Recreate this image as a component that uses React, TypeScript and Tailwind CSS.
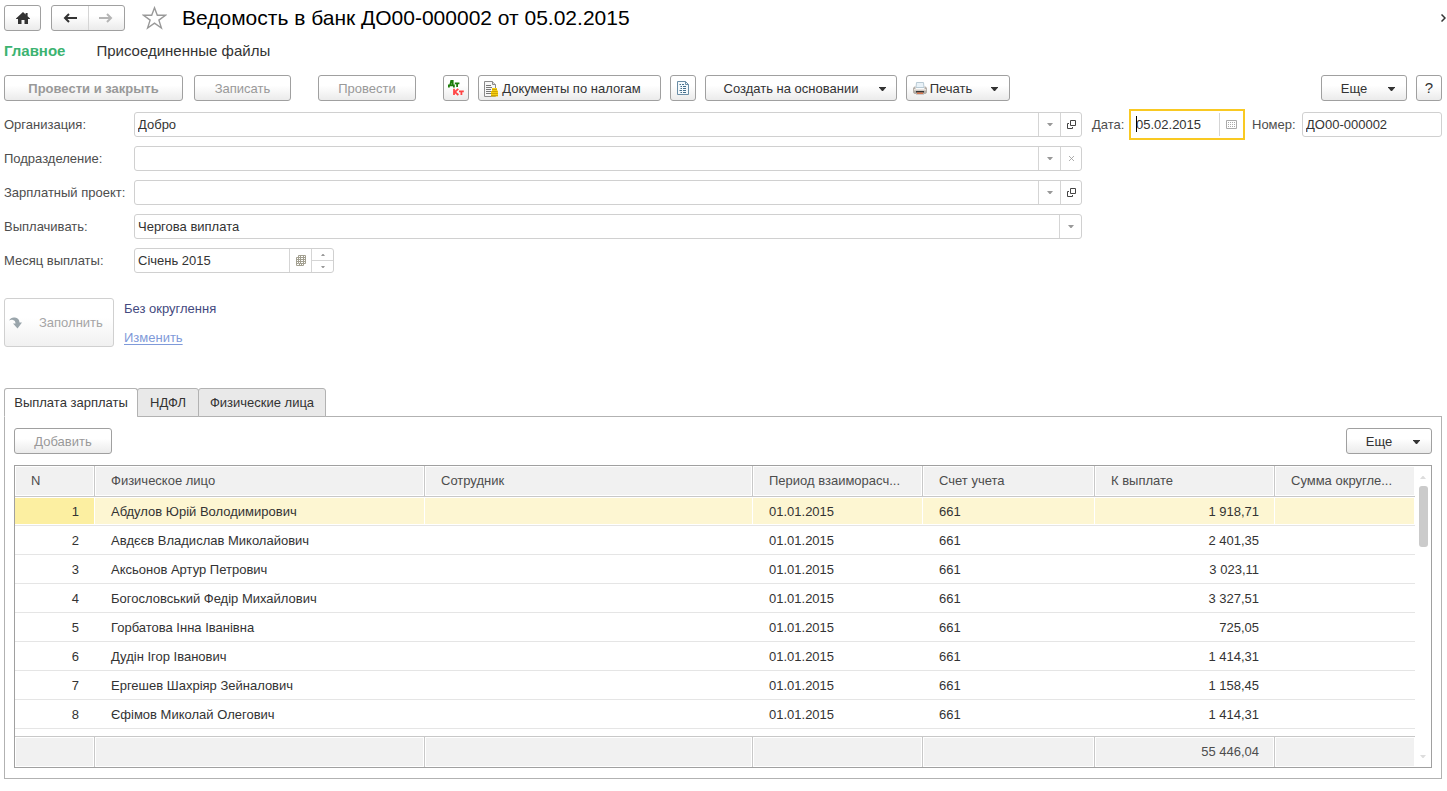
import type { ReactNode } from "react";
import clsx from "clsx";

const columns = [
  { title: "N", width: "w-[80px]" },
  { title: "Физическое лицо", width: "w-[330px]" },
  { title: "Сотрудник", width: "" },
  { title: "Период взаиморасч...", width: "w-[170px]" },
  { title: "Счет учета", width: "w-[172px]" },
  { title: "К выплате", width: "w-[180px]" },
  { title: "Сумма округле...", width: "w-[140px]" },
];

const rows = [
  { name: "Абдулов Юрій Володимирович", sum: "1 918,71" },
  { name: "Авдєєв Владислав Миколайович", sum: "2 401,35" },
  { name: "Аксьонов Артур Петрович", sum: "3 023,11" },
  { name: "Богословський Федір Михайлович", sum: "3 327,51" },
  { name: "Горбатова Інна Іванівна", sum: "725,05" },
  { name: "Дудін Ігор Іванович", sum: "1 414,31" },
  { name: "Ергешев Шахріяр Зейналович", sum: "1 158,45" },
  { name: "Єфімов Миколай Олегович", sum: "1 414,31" },
];

const Caret = ({ className }: { className?: string }) => (
  <svg viewBox="0 0 7 4" className={clsx("h-1 w-[7px] shrink-0", className)} fill="currentColor">
    <path d="M0 0h7v.6L4 4H3L0 .6z" />
  </svg>
);

const SmallCaret = ({ up }: { up?: boolean }) => (
  <svg viewBox="0 0 6 3" className={clsx("h-[3px] w-[6px]", up && "rotate-180")} fill="currentColor">
    <path d="M0 0h6L3.5 3h-1z" />
  </svg>
);

const HomeIcon = () => (
  <svg viewBox="0 0 14 12" className="h-3 w-[14px]" fill="#333">
    <path d="M7 0l2.6 2.4V1h2v3.2L14 6.5V7h-2v5H8.5V8h-3v4H2V7H0v-.5z" />
  </svg>
);

const ArrowIcon = ({ flip }: { flip?: boolean }) => (
  <svg viewBox="0 0 14 10" className={clsx("h-[10px] w-[14px]", flip && "rotate-180")} fill="none">
    <path d="M14 5H2M6 1L2 5l4 4" stroke="currentColor" strokeWidth="2" />
  </svg>
);

const StarIcon = () => (
  <svg viewBox="0 0 25 24" className="h-6 w-[25px]" fill="#fff" stroke="#999" strokeWidth="1.4">
    <path d="M12.5 1.8l2.8 7.4h8.2l-6.6 4.9 2.5 8-6.9-4.9-6.9 4.9 2.5-8-6.6-4.9h8.2z" />
  </svg>
);

const DtKtIcon = () => (
  <svg viewBox="0 0 16 16" className="h-4 w-4" fill="none">
    <g stroke="#1e7d0c" strokeWidth="1.8">
      <path d="M.9 7.4V5.4h5v2M2.2 5.2L3.2 1h1.500v4.400" />
      <path d="M6.800 3.400h4.600M9.100 3.400v3.600" />
    </g>
    <g stroke="#f44" strokeWidth="1.800">
      <path d="M6 8.800v6.200M10.300 8.900L6.800 12l3.600 3" />
      <path d="M11 11.400h4.800M13.400 11.400v3.600" />
    </g>
  </svg>
);

const TaxDocIcon = () => (
  <svg viewBox="0 0 15 16" className="h-4 w-[15px]" fill="none">
    <path d="M.5.5h8l3 3v12H.5z" fill="#f7f7f7" stroke="#8a8a8a" />
    <path d="M8.5.5v3h3" fill="#ddd" stroke="#8a8a8a" />
    <path d="M2 4.500h5M2 6.500h6M2 8.500h5M2 10.500h5M2 12.500h5" stroke="#777" />
    <path d="M8 7h5v2.500h1V15.500H7V10h1z" fill="#f7cf12" />
    <path d="M8 8.500h5M7.500 10.500h6M7 12.500h7M7 14.500h7" stroke="#c29a00" strokeWidth=".8" />
  </svg>
);

const ReportIcon = () => (
  <svg viewBox="0 0 12 14" className="h-[14px] w-3" fill="none">
    <path d="M.5.5h8l3 3v10H.5z" fill="#f4f9fc" stroke="#6a8da5" />
    <path d="M8.5.5v3h3" stroke="#6a8da5" />
    <path
      d="M2.500 3.500H4M5 3.500h2M3.500 5.500H5M6 5.500h3M3.500 7.500H5M6 7.500h3M2.500 9.500H5M6 9.500h3M3.500 11.500H5M6 11.500h3"
      stroke="#456f8c"
    />
  </svg>
);

const PrinterIcon = () => (
  <svg viewBox="0 0 14 13" className="h-[13px] w-[14px]" fill="none">
    <path d="M3.500.5h7l.5 5H3z" fill="#e9f2f8" stroke="#b9cad4" />
    <path d="M1.500 4.500h1V7h9V4.500h1L14 6v4.500L12.500 12h-11L0 10.500V6z" fill="#b5afa8" />
    <path d="M1 7h12v1.500H1z" fill="#e6e2de" />
    <path d="M3 9h8v1.500H3z" fill="#333" />
    <path d="M4 10.500h6V12H4z" fill="#d9764f" />
    <path d="M3 12h8v1H3z" fill="#ccc" />
  </svg>
);

const OpenIcon = () => (
  <svg viewBox="0 0 9 9" className="h-[9px] w-[9px]" fill="none" stroke="#444">
    <path d="M3.500.5h5v5h-5zM2 3.500H.5v5h5V7" />
  </svg>
);

const ClearIcon = () => (
  <svg viewBox="0 0 5 5" className="h-[5px] w-[5px]" fill="none" stroke="#999" strokeWidth=".8">
    <path d="M0 0l5 5M5 0L0 5" />
  </svg>
);

const CalendarIcon = () => (
  <svg viewBox="0 0 11 9" className="h-[9px] w-[11px]" fill="none" stroke="#aaa">
    <path d="M.5.5h10v8H.5z" />
    <path d="M2 2.500h7M2 4.500h7M2 6.500h7" strokeDasharray="1 1" />
  </svg>
);

const MonthsIcon = () => (
  <svg viewBox="0 0 10 11" className="h-[11px] w-[10px]" fill="none" stroke="#a29f90">
    <path d="M2.500.5h7v8h-7zM4.500.5v8M7.500.5v8M2.500 2.500h7M2.500 4.500h7M2.500 6.500h7" />
    <path d="M2 2.500H.5v8h7V9M.5 4.500H2M.5 6.500H2M.5 8.500H2M3.500 9v1.500M5.500 9v1.500" />
  </svg>
);

const FillIcon = () => (
  <svg viewBox="0 0 13 12" className="h-3 w-[13px]" fill="#9aa5ab">
    <path d="M0 3.500C1.500 1 3.500 0 6 .5c2.500.5 4.500 2 4.500 5H13L8.500 11.500 4 6.500h2.500c0-2-1-3.200-2.500-3.500C2.500 2.700 1.300 2.900 0 3.500z" />
  </svg>
);

const Button = ({
  children,
  className,
  disabled,
  label,
}: {
  children: ReactNode;
  className?: string;
  disabled?: boolean;
  label?: string;
}) => (
  <button
    aria-label={label}
    disabled={disabled}
    className={clsx(
      "flex h-[26px] shrink-0 items-center justify-center rounded-[3px] border border-[#a0a0a0] bg-linear-to-b from-white from-40% to-[#ebebeb] leading-[18px] whitespace-nowrap",
      disabled ? "text-[#999]" : "text-[#333]",
      className
    )}
  >
    {children}
  </button>
);

const FieldButton = ({ children, label }: { children: ReactNode; label: string }) => (
  <button
    aria-label={label}
    className="flex w-[22px] shrink-0 items-center justify-center border-l border-[#d5d5d5] text-[#999] last:w-[21px]"
  >
    {children}
  </button>
);

const Field = ({
  id,
  label,
  value,
  children,
}: {
  id: string;
  label: string;
  value: string;
  children?: ReactNode;
}) => (
  <div className="flex items-center">
    <label htmlFor={id} className="w-[130px] shrink-0 text-[#4d4d4d]">
      {label}
    </label>
    <div className="flex h-[25px] min-w-0 flex-1 rounded-[3px] border border-[#d0d0d0]">
      <input id={id} defaultValue={value} className="min-w-0 flex-1 px-[3px] outline-none" />
      {children}
    </div>
  </div>
);

const MoreButton = () => (
  <Button className="w-[86px] gap-[21px] pt-px pl-2">
    <span>Еще</span>
    <Caret />
  </Button>
);

const Header = () => (
  <header className="flex items-center">
    <Button label="Начальная страница" className="w-[37px]">
      <HomeIcon />
    </Button>
    <div className="ml-[10px] flex h-[26px] w-[74px] rounded-[3px] border border-[#a0a0a0] bg-linear-to-b from-white from-40% to-[#ebebeb] text-[#333]">
      <button aria-label="Назад" className="flex flex-1 items-center justify-center">
        <ArrowIcon />
      </button>
      <button
        aria-label="Вперед"
        className="flex flex-1 items-center justify-center border-l border-[#d5d5d5] text-[#b5b5b5]"
      >
        <ArrowIcon flip />
      </button>
    </div>
    <button aria-label="В избранное" className="ml-[17px]">
      <StarIcon />
    </button>
    <h1 className="ml-[15px] text-[21px] leading-6 text-black">
      Ведомость в банк ДО00-000002 от 05.02.2015
    </h1>
    <button aria-label="Закрыть" className="-mr-1 ml-auto">
      <svg viewBox="0 0 5 8" className="h-2 w-[5px]" fill="none" stroke="#333" strokeWidth="1.5">
        <path d="M.5.5L4 4 .5 7.500" />
      </svg>
    </button>
  </header>
);

const Toolbar = () => (
  <div className="mt-[14px] flex">
    <Button disabled className="w-[179px] pt-px font-bold">
      Провести и закрыть
    </Button>
    <Button disabled className="ml-[11px] w-[97px] pt-px">
      Записать
    </Button>
    <Button disabled className="ml-[27px] w-[98px] pt-px">
      Провести
    </Button>
    <div className="ml-[27px] flex gap-[9px]">
      <Button label="Проводки" className="w-[26px]">
        <DtKtIcon />
      </Button>
      <Button className="w-[183px] gap-[3px] pt-px pr-[14px]">
        <TaxDocIcon />
        Документы по налогам
      </Button>
      <Button label="Отчет" className="w-[26px]">
        <ReportIcon />
      </Button>
      <Button className="w-[192px] gap-[21px] pt-px pl-2">
        Создать на основании
        <Caret />
      </Button>
      <Button className="w-[104px] gap-[3px] pt-px pr-[5px]">
        <PrinterIcon />
        Печать
        <Caret className="ml-4" />
      </Button>
    </div>
    <div className="ml-auto flex gap-[9px]">
      <MoreButton />
      <Button label="Справка" className="w-[26px] text-[15px]">
        ?
      </Button>
    </div>
  </div>
);

const Form = () => (
  <div className="mt-[11px] flex items-start">
    <div className="flex flex-1 flex-col gap-[9px]">
      <Field id="org" label="Организация:" value="Добро">
        <FieldButton label="Выбрать">
          <SmallCaret />
        </FieldButton>
        <FieldButton label="Открыть">
          <OpenIcon />
        </FieldButton>
      </Field>
      <Field id="dept" label="Подразделение:" value="">
        <FieldButton label="Выбрать">
          <SmallCaret />
        </FieldButton>
        <FieldButton label="Очистить">
          <ClearIcon />
        </FieldButton>
      </Field>
      <Field id="project" label="Зарплатный проект:" value="">
        <FieldButton label="Выбрать">
          <SmallCaret />
        </FieldButton>
        <FieldButton label="Открыть">
          <OpenIcon />
        </FieldButton>
      </Field>
      <div className="flex items-center">
        <label htmlFor="pay" className="w-[130px] shrink-0 text-[#4d4d4d]">
          Выплачивать:
        </label>
        <div className="relative flex h-[25px] flex-1 rounded-[3px] border border-[#d0d0d0]">
          <select id="pay" className="flex-1 appearance-none px-[3px] outline-none">
            <option>Чергова виплата</option>
          </select>
          <span className="pointer-events-none absolute inset-y-0 right-0 flex w-[22px] items-center justify-center border-l border-[#d5d5d5] text-[#999]">
            <SmallCaret />
          </span>
        </div>
      </div>
      <div className="w-[330px]">
        <Field id="month" label="Месяц выплаты:" value="Січень 2015">
          <FieldButton label="Выбрать месяц">
            <MonthsIcon />
          </FieldButton>
          <div className="flex w-[22px] flex-col border-l border-[#d5d5d5] text-[#999]">
            <button aria-label="Следующий месяц" className="flex flex-1 items-center justify-center">
              <svg viewBox="0 0 4 2" className="h-[2px] w-1" fill="currentColor">
                <path d="M0 2h4L2.500 0h-1z" />
              </svg>
            </button>
            <button
              aria-label="Предыдущий месяц"
              className="flex flex-1 items-center justify-center border-t border-[#d5d5d5]"
            >
              <svg viewBox="0 0 4 2" className="h-[2px] w-1" fill="currentColor">
                <path d="M0 0h4L2.500 2h-1z" />
              </svg>
            </button>
          </div>
        </Field>
      </div>
    </div>
    <div className="ml-[10px] flex h-[25px] items-center">
      <label htmlFor="date" className="w-[37px] text-[#4d4d4d]">
        Дата:
      </label>
      <div className="relative flex h-[31px] w-[116px] border-2 border-[#f9c922] py-[2px]">
        <input id="date" defaultValue="05.02.2015" className="min-w-0 flex-1 px-[5px] outline-none" />
        <span className="absolute top-[5px] left-[5px] h-4 w-px bg-black" />
        <button
          aria-label="Календарь"
          className="flex w-6 items-center justify-center border-l border-[#d5d5d5]"
        >
          <CalendarIcon />
        </button>
      </div>
      <label htmlFor="number" className="ml-[7px] w-[50px] text-[#4d4d4d]">
        Номер:
      </label>
      <input
        id="number"
        defaultValue="ДО00-000002"
        className="h-[25px] w-[140px] rounded-[3px] border border-[#d0d0d0] px-[3px] outline-none"
      />
    </div>
  </div>
);

const Tab = ({
  children,
  active,
  className,
}: {
  children: ReactNode;
  active?: boolean;
  className?: string;
}) => (
  <button
    role="tab"
    aria-selected={!!active}
    className={clsx(
      "-mr-px h-[29px] rounded-t-[3px] border border-[#b2b2b2] whitespace-nowrap",
      active ? "border-b-white bg-white" : "bg-[#e9e9e9]",
      className
    )}
  >
    {children}
  </button>
);

const edge = "shadow-[inset_0_0_0_1px_#fff] bg-[#f1f1f1]";

const PaymentsTable = () => (
  <div className="mt-[11px] flex border border-[#a0a0a0]">
    <table className="flex-1 table-fixed border-separate border-spacing-0">
      <thead>
        <tr className="h-[31px]">
          {columns.map(({ title, width }) => (
            <th
              key={title}
              className={clsx(
                "border-r border-b border-[#c8c8c8] px-4 text-left font-normal whitespace-nowrap text-[#4d4d4d] last:border-r-0",
                edge,
                width
              )}
            >
              {title}
            </th>
          ))}
        </tr>
      </thead>
      <tbody>
        {rows.map(({ name, sum }, i) => (
          <tr
            key={name}
            className={clsx(
              "h-[29px] *:border-b *:border-[#e5e5e5] *:px-4 *:pt-px",
              i === 0 &&
                "*:bg-[#fdf6d2] *:shadow-[inset_0_1px_0_#fff,inset_0_-1px_0_#fff,inset_-1px_0_0_#fff] *:first:bg-[#fcefa1]"
            )}
          >
            <td className="text-right">{i + 1}</td>
            <td>{name}</td>
            <td />
            <td>01.01.2015</td>
            <td>661</td>
            <td className="text-right">{sum}</td>
            <td />
          </tr>
        ))}
        <tr className="h-[7px]">
          <td colSpan={7} />
        </tr>
      </tbody>
      <tfoot>
        <tr className="h-[31px]">
          {columns.map(({ title }) => (
            <td
              key={title}
              className={clsx(
                "border-t border-r border-[#c8c8c8] pr-[15px] text-right text-[#4d4d4d] last:border-r-0",
                edge
              )}
            >
              {title === "К выплате" && "55 446,04"}
            </td>
          ))}
        </tr>
      </tfoot>
    </table>
    <div className="flex w-4 flex-col items-center pt-[10px] pb-[9px] text-[#ddd]">
      <SmallCaret up />
      <div className="mt-[7px] h-[61px] w-[9px] rounded-[3px] bg-[#cbcbcb]" />
      <div className="mt-auto">
        <SmallCaret />
      </div>
    </div>
  </div>
);

export default function App() {
  return (
    <main className="min-w-[1280px] bg-white py-[5px] pr-[5px] pl-1 font-['Liberation_Sans',Arial,sans-serif] text-[13px] leading-4 text-[#333]">
      <Header />
      <nav className="mt-[10px] flex gap-[31px] text-[15px] leading-5">
        <a href="#main" className="font-bold text-[#3cb371]">
          Главное
        </a>
        <a href="#files">Присоединенные файлы</a>
      </nav>
      <Toolbar />
      <Form />
      <div className="mt-[25px] flex gap-[10px]">
        <button
          disabled
          className="flex h-[49px] w-[110px] items-center gap-[17px] rounded-[3px] border border-[#d0d0d0] bg-linear-to-b from-white from-40% to-[#f1f1f1] pl-1 text-[#a5a5a5]"
        >
          <FillIcon />
          Заполнить
        </button>
        <div className="flex flex-col items-start gap-[13px] pt-[3px]">
          <span className="text-[#444a80]">Без округлення</span>
          <a href="#rounding" className="text-[#7f9ad9] underline underline-offset-2">
            Изменить
          </a>
        </div>
      </div>
      <div role="tablist" className="relative mt-[41px] flex">
        <Tab active className="w-[134px]">
          Выплата зарплаты
        </Tab>
        <Tab className="w-[62px]">НДФЛ</Tab>
        <Tab className="w-[128px]">Физические лица</Tab>
      </div>
      <section className="-mt-px border border-[#b2b2b2] px-[9px] pt-[11px] pb-[10px]">
        <div className="flex justify-between">
          <Button disabled className="w-[98px] pt-px">
            Добавить
          </Button>
          <MoreButton />
        </div>
        <PaymentsTable />
      </section>
    </main>
  );
}
